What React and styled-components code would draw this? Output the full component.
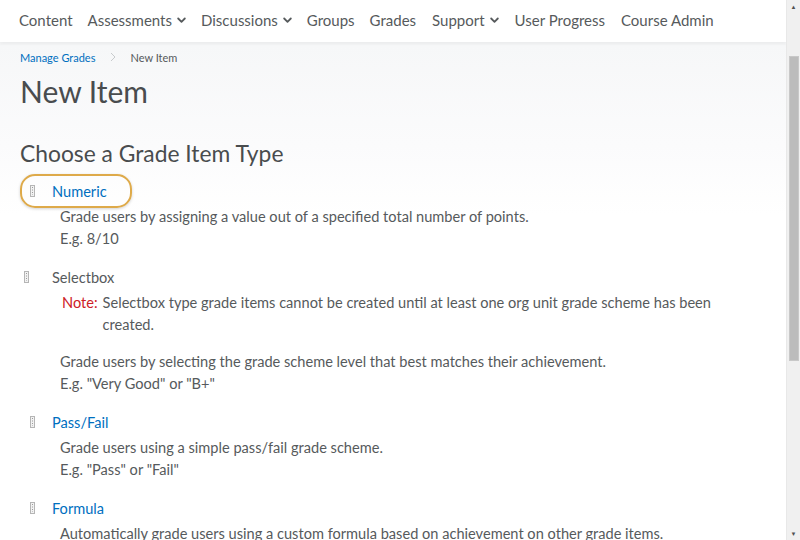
import React from 'react'
import styled, { createGlobalStyle } from 'styled-components'

const GlobalStyle = createGlobalStyle`
  html, body {
    margin: 0;
    padding: 0;
    background: #ffffff;
    overflow: hidden;
  }
  body {
    font-family: Lato, "Open Sans", "Liberation Sans", sans-serif;
    color: #565a5c;
  }
`

const navItems = [
  { label: 'Content' },
  { label: 'Assessments', menu: true },
  { label: 'Discussions', menu: true },
  { label: 'Groups' },
  { label: 'Grades' },
  { label: 'Support', menu: true },
  { label: 'User Progress' },
  { label: 'Course Admin' },
]

const Chevron = () => (
  <svg width="9" height="7" viewBox="0 0 9 7">
    <path d="M1.2 1.5 L4.5 4.8 L7.8 1.5" fill="none" stroke="#565a5c" strokeWidth="1.8" strokeLinecap="round" strokeLinejoin="round" />
  </svg>
)

const Handle = () => (
  <svg width="5" height="12" viewBox="0 0 5 12">
    <rect x="0.5" y="0.5" width="4" height="11" fill="#f2f2f2" stroke="#b5b5b5" />
    <path d="M2.5 2 V3 M2.5 4.5 V5.5 M2.5 7 V8 M2.5 9.5 V10" stroke="#9a9a9a" strokeWidth="1" />
  </svg>
)

const App = () => (
  <Frame>
    <GlobalStyle />
    <Main>
      <NavBar>
        {navItems.map(item => (
          <NavItem key={item.label}>
            {item.label}
            {item.menu && <Chevron />}
          </NavItem>
        ))}
      </NavBar>
      <Page>
        <Breadcrumbs>
          <Crumb href="#">Manage Grades</Crumb>
          <CrumbSep>
            <svg width="6" height="10" viewBox="0 0 6 10">
              <path d="M1 1 L5 5 L1 9" fill="none" stroke="#c8cbcd" strokeWidth="1" />
            </svg>
          </CrumbSep>
          <CurrentCrumb>New Item</CurrentCrumb>
        </Breadcrumbs>
        <Title>New Item</Title>
        <SubTitle>Choose a Grade Item Type</SubTitle>

        <GradeItem>
          <ItemHead focused>
            <HandleBox offset={8}><Handle /></HandleBox>
            <ItemLink href="#">Numeric</ItemLink>
          </ItemHead>
          <Desc>
            Grade users by assigning a value out of a specified total number of points.<br />
            E.g. 8/10
          </Desc>
        </GradeItem>

        <GradeItem>
          <ItemHead>
            <HandleBox offset={2}><Handle /></HandleBox>
            <ItemLabel>Selectbox</ItemLabel>
          </ItemHead>
          <Note>
            <NoteTag>Note:</NoteTag>
            <span>Selectbox type grade items cannot be created until at least one org unit grade scheme has been created.</span>
          </Note>
          <Desc>
            Grade users by selecting the grade scheme level that best matches their achievement.<br />
            E.g. "Very Good" or "B+"
          </Desc>
        </GradeItem>

        <GradeItem>
          <ItemHead>
            <HandleBox offset={8}><Handle /></HandleBox>
            <ItemLink href="#">Pass/Fail</ItemLink>
          </ItemHead>
          <Desc>
            Grade users using a simple pass/fail grade scheme.<br />
            E.g. "Pass" or "Fail"
          </Desc>
        </GradeItem>

        <GradeItem>
          <ItemHead>
            <HandleBox offset={8}><Handle /></HandleBox>
            <ItemLink href="#">Formula</ItemLink>
          </ItemHead>
          <Desc>
            Automatically grade users using a custom formula based on achievement on other grade items.
          </Desc>
        </GradeItem>
      </Page>
    </Main>
    <ScrollBar>
      <ScrollArrow>▲</ScrollArrow>
      <ScrollTrack>
        <ScrollThumb />
      </ScrollTrack>
      <ScrollArrow>▼</ScrollArrow>
    </ScrollBar>
  </Frame>
)

const Frame = styled.div`
  display: flex;
  width: 800px;
  height: 540px;
  overflow: hidden;
`

const Main = styled.div`
  flex: 1;
  display: flex;
  flex-direction: column;
  min-width: 0;
  overflow: hidden;
`

const NavBar = styled.nav`
  height: 42px;
  flex-shrink: 0;
  display: flex;
  align-items: center;
  gap: 15px;
  padding: 0 0 2px 19px;
  box-sizing: border-box;
  background: #ffffff;
  box-shadow: 0 2px 3px rgba(0, 0, 0, 0.04);
  position: relative;
  z-index: 1;
`

const NavItem = styled.span`
  display: inline-flex;
  align-items: center;
  gap: 5px;
  font-size: 15px;
  color: #565a5c;
  white-space: nowrap;
  &:nth-child(n + 6) {
    margin-left: 1px;
  }
`

const Page = styled.div`
  flex: 1;
  padding: 0 20px;
  background: linear-gradient(#f6f7f8 0px, #fbfbfc 100px, #ffffff 170px);
  border-top: 3px solid #f4f5f6;
`

const Breadcrumbs = styled.div`
  display: flex;
  align-items: center;
  height: 24px;
  font-size: 11px;
`

const Crumb = styled.a`
  color: #006fbf;
  text-decoration: none;
`

const CrumbSep = styled.span`
  display: inline-flex;
  margin: 0 14px 0 15px;
`

const CurrentCrumb = styled.span`
  color: #565a5c;
`

const Title = styled.h1`
  margin: 2px 0 0;
  font-size: 30px;
  font-weight: 400;
  color: #494c4e;
  line-height: 40px;
`

const SubTitle = styled.h2`
  margin: 27px 0 6px;
  font-size: 22.8px;
  font-weight: 400;
  color: #494c4e;
  line-height: 30px;
`

const GradeItem = styled.section`
  margin-bottom: 10px;
`

const ItemHead = styled.div`
  display: flex;
  align-items: center;
  width: 112px;
  height: 34px;
  box-sizing: border-box;
  margin-bottom: -2px;
  border: 2px solid ${p => (p.focused ? '#deaa4a' : 'transparent')};
  border-radius: 15px;
  box-shadow: ${p => (p.focused ? '0 1px 3px rgba(0,0,0,0.18)' : 'none')};
`

const HandleBox = styled.span`
  display: inline-flex;
  width: 30px;
  padding-left: ${p => p.offset}px;
  box-sizing: border-box;
`

const ItemLink = styled.a`
  font-size: 14.6px;
  color: #006fbf;
  text-decoration: none;
`

const ItemLabel = styled.span`
  font-size: 14.6px;
  color: #565a5c;
`

const Desc = styled.p`
  margin: 0;
  padding-left: 40px;
  font-size: 14.6px;
  line-height: 22px;
  color: #565a5c;
`

const Note = styled.div`
  display: flex;
  padding: 0 40px 0 42px;
  margin: 0 0 15px;
  font-size: 14.6px;
  line-height: 22px;
`

const NoteTag = styled.span`
  color: #cd2026;
  margin-right: 5px;
  flex-shrink: 0;
`

const ScrollBar = styled.div`
  width: 13px;
  flex-shrink: 0;
  display: flex;
  flex-direction: column;
  background: #f0f0f0;
  border-left: 1px solid #e8e8e8;
`

const ScrollArrow = styled.div`
  height: 13px;
  font-size: 6px;
  line-height: 13px;
  text-align: center;
  color: #505050;
`

const ScrollTrack = styled.div`
  flex: 1;
  padding: 43px 1px 0 2px;
`

const ScrollThumb = styled.div`
  height: 305px;
  background: #bcbcbc;
  border: 1px solid #c8c8c8;
  box-sizing: border-box;
`

export default App
